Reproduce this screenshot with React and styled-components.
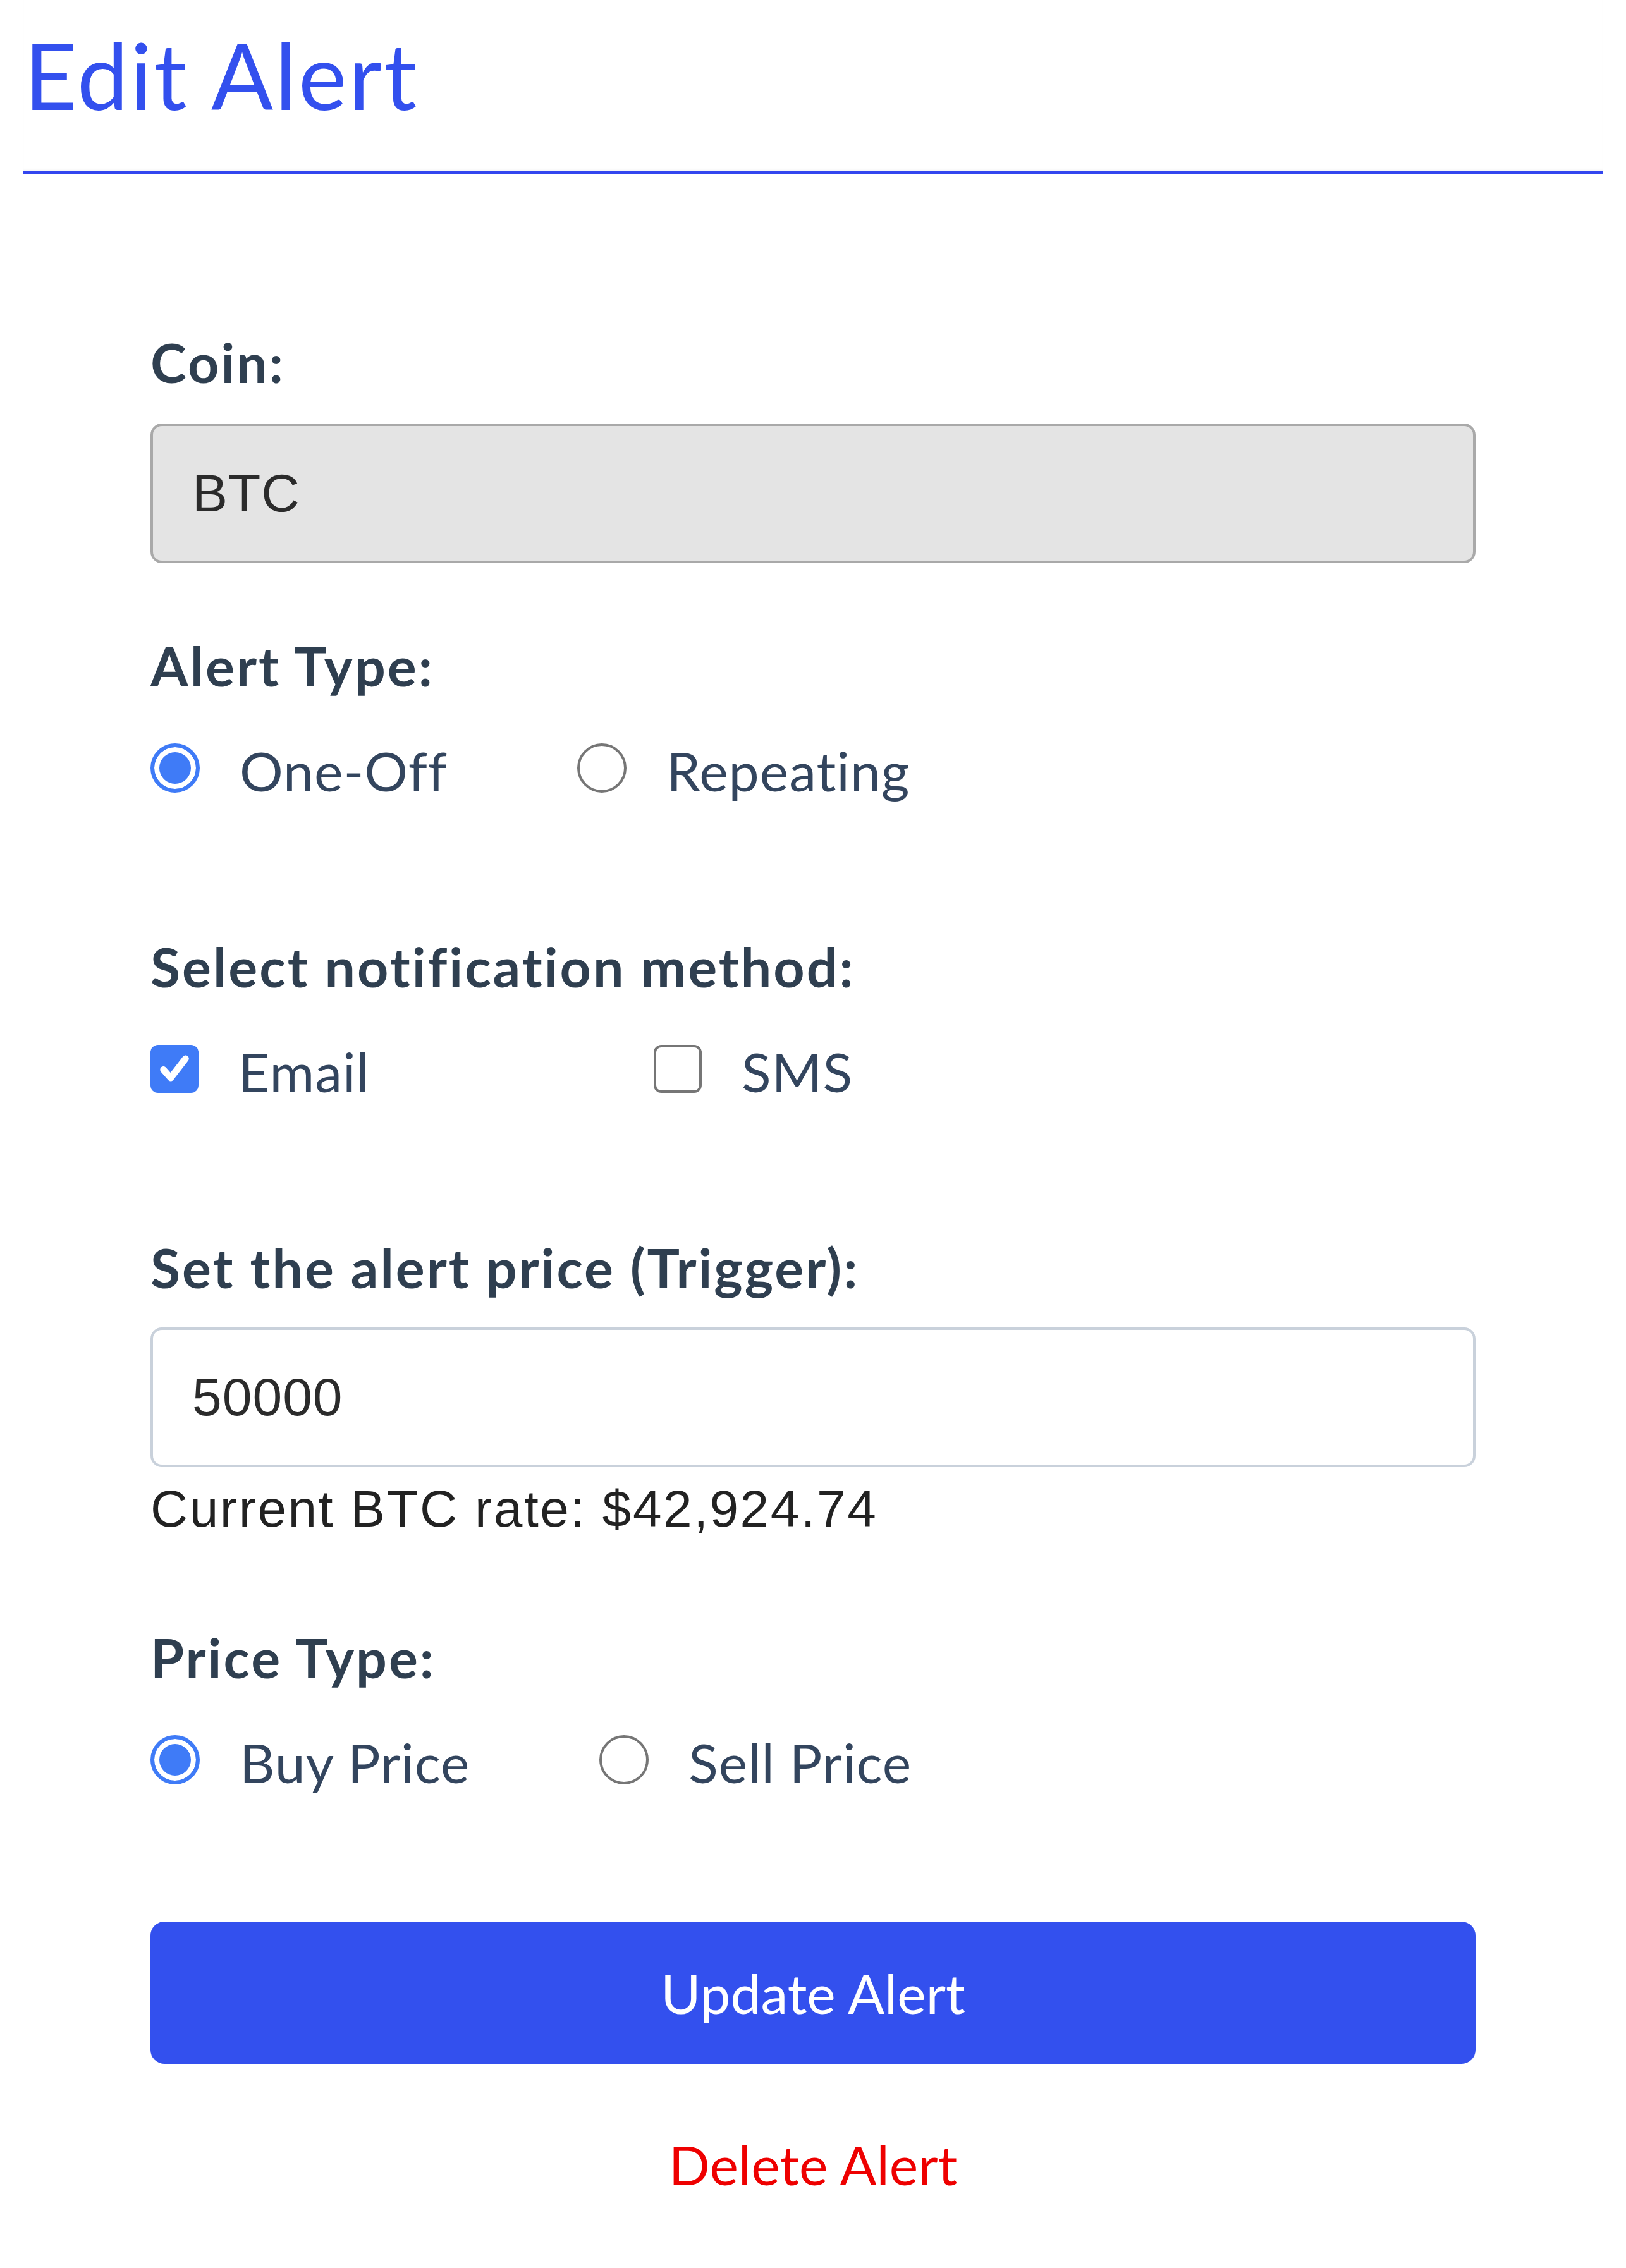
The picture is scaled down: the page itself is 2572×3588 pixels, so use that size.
import styled, { createGlobalStyle } from 'styled-components';

const GlobalStyle = createGlobalStyle`
  html, body {
    margin: 0;
    padding: 0;
    background: #fff;
    overflow: hidden;
  }
  body {
    font-family: Lato, "Liberation Sans", sans-serif;
  }
`;

const Page = styled.div`
  width: 100%;
  padding: 0 36px;
  box-sizing: border-box;
`;

const Header = styled.header`
  padding: 31px 0 66px;
  border-bottom: 5px solid #3346ef;
  box-shadow: 0 -3px 4px -2px rgba(0, 0, 0, 0.08) inset;
`;

const Title = styled.h1`
  margin: 0;
  padding-left: 2px;
  font-family: Lato, sans-serif;
  font-weight: 400;
  font-size: 145px;
  line-height: 1.2;
  letter-spacing: 3px;
  color: #3350ee;
`;

const Form = styled.form`
  width: 2096px;
  margin: 0 auto;
  display: flex;
  flex-direction: column;
`;

const Label = styled.div`
  margin-top: ${(p) => p.$top}px;
  font-family: Lato, sans-serif;
  font-weight: 700;
  font-size: 86px;
  line-height: 101px;
  letter-spacing: 3px;
  color: #2f3f50;
`;

const TextInput = styled.input`
  display: block;
  box-sizing: border-box;
  width: 100%;
  height: 221px;
  margin-top: ${(p) => p.$top}px;
  padding: 0 0 0 62px;
  border: 4px solid ${(p) => (p.readOnly ? '#a9a9a9' : '#c9d1db')};
  border-radius: 18px;
  background: ${(p) => (p.readOnly ? '#e4e4e4' : '#fff')};
  font-family: "Liberation Sans", Arial, sans-serif;
  font-size: 84px;
  letter-spacing: 1px;
  color: #2b2b2b;
  outline: none;
`;

const OptionRow = styled.div`
  display: flex;
  align-items: center;
  gap: ${(p) => p.$gap}px;
  margin-top: 64px;
`;

const Option = styled.label`
  display: flex;
  align-items: center;
  gap: 63px;
  font-family: Lato, sans-serif;
  font-size: 86px;
  line-height: 103px;
  letter-spacing: 1px;
  color: #33455e;
`;

const RadioMark = styled.span`
  box-sizing: border-box;
  flex: 0 0 78px;
  width: 78px;
  height: 78px;
  margin-top: -8px;
  border-radius: 50%;
  border: ${(p) => (p.$on ? '6px solid #3f7bf7' : '4px solid #767676')};
  background: ${(p) => (p.$on ? '#3f7bf7' : '#fff')};
  box-shadow: ${(p) => (p.$on ? 'inset 0 0 0 8px #fff' : 'none')};
`;

const CheckMark = styled.span`
  box-sizing: border-box;
  flex: 0 0 76px;
  width: 76px;
  height: 76px;
  margin-top: -8px;
  border-radius: 12px;
  border: ${(p) => (p.$on ? 'none' : '4px solid #767676')};
  background: ${(p) => (p.$on ? '#3f7bf7' : '#fff')};
  display: flex;
  align-items: center;
  justify-content: center;
`;

const Rate = styled.div`
  margin-top: 17px;
  font-family: "Liberation Sans", Arial, sans-serif;
  font-size: 82px;
  line-height: 98px;
  letter-spacing: 2.5px;
  color: #222;
`;

const Button = styled.button`
  margin-top: 201px;
  height: 225px;
  width: 100%;
  border: none;
  border-radius: 22px;
  background: #3350ee;
  color: #fff;
  font-family: Lato, sans-serif;
  font-size: 86px;
  letter-spacing: 0;
  cursor: pointer;
`;

const DeleteLink = styled.div`
  margin-top: 107px;
  text-align: center;
  font-family: Lato, sans-serif;
  font-size: 86px;
  line-height: 103px;
  letter-spacing: 0;
  color: #ee0000;
`;

function Radio({ on, children }) {
  return (
    <Option>
      <RadioMark $on={on} />
      {children}
    </Option>
  );
}

function Check({ on, children }) {
  return (
    <Option>
      <CheckMark $on={on}>
        {on && (
          <svg width="60" height="60" viewBox="0 0 24 24" fill="none">
            <path d="M5 12.5l4.6 5.2L19 5.5" stroke="#fff" strokeWidth="4.2" strokeLinecap="round" strokeLinejoin="round" />
          </svg>
        )}
      </CheckMark>
      {children}
    </Option>
  );
}

export default function App() {
  return (
    <Page>
      <GlobalStyle />
      <Header>
        <Title>Edit Alert</Title>
      </Header>
      <Form onSubmit={(e) => e.preventDefault()}>
        <Label $top={246}>Coin:</Label>
        <TextInput $top={47} value="BTC" readOnly />

        <Label $top={111}>Alert Type:</Label>
        <OptionRow $gap={205}>
          <Radio on>One-Off</Radio>
          <Radio>Repeating</Radio>
        </OptionRow>

        <Label $top={208}>Select notification method:</Label>
        <OptionRow $gap={449}>
          <Check on>Email</Check>
          <Check>SMS</Check>
        </OptionRow>

        <Label $top={208}>Set the alert price (Trigger):</Label>
        <TextInput $top={45} defaultValue="50000" />
        <Rate>Current BTC rate: $42,924.74</Rate>

        <Label $top={135}>Price Type:</Label>
        <OptionRow $gap={205}>
          <Radio on>Buy Price</Radio>
          <Radio>Sell Price</Radio>
        </OptionRow>

        <Button type="submit">Update Alert</Button>
        <DeleteLink>Delete Alert</DeleteLink>
      </Form>
    </Page>
  );
}
